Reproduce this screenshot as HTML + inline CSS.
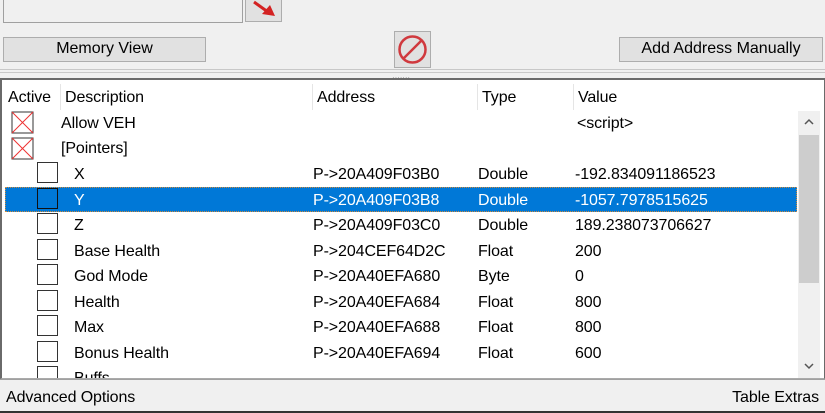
<!DOCTYPE html>
<html><head><style>
*{margin:0;padding:0;box-sizing:border-box}
body{width:825px;height:413px;background:#f0f0f0;font-family:"Liberation Sans",sans-serif;font-size:16px;color:#000;position:relative;overflow:hidden}
.a{position:absolute}
.btn{position:absolute;background:#e1e1e1;border:1px solid #adadad;text-align:center;line-height:22px}
.t{position:absolute;white-space:nowrap;margin-top:1px;letter-spacing:-0.1px}
.cb{position:absolute;width:21px;height:21px;border:1px solid #333;background:#fff}
</style></head><body>
<div class="a" style="left:3px;top:-4px;width:240px;height:27px;border:1px solid #a0a0a0;background:#f0f0f0"></div>
<div class="btn" style="left:245px;top:-2px;width:37px;height:24px"></div>
<svg class="a" style="left:250px;top:0" width="30" height="20"><path d="M4 2 L18 12" stroke="#d32222" stroke-width="3"/><path d="M12 14 L25 16 L20 5 Z" fill="#d32222"/></svg>
<div class="btn" style="left:3px;top:37px;width:203px;height:25px">Memory View</div>
<div class="btn" style="left:394px;top:31px;width:37px;height:37px"></div>
<svg class="a" style="left:397px;top:34px" width="31" height="31"><circle cx="15.5" cy="15.5" r="13" fill="none" stroke="#d0393e" stroke-width="2.5"/><path d="M7 24 L24 7" stroke="#d0393e" stroke-width="2.5"/></svg>
<div class="btn" style="left:619px;top:37px;width:204px;height:25px">Add Address Manually</div>
<div class="a" style="left:0;top:69px;width:825px;height:1px;background:#c8c8c8"></div>
<div class="a" style="left:0;top:72px;width:825px;height:1px;background:#c8c8c8"></div>
<div class="t" style="left:392px;top:72px;font-size:8px;color:#999">·······</div>
<div class="a" style="left:0;top:78px;width:825px;height:301px;background:#fff;border-top:2px solid #6a6a6a;border-left:2px solid #6a6a6a;border-right:1px solid #6a6a6a;border-bottom:1px solid #aaa"></div>
<div class="a" style="left:60px;top:84px;width:1px;height:26px;background:#e5e5e5"></div>
<div class="a" style="left:312px;top:84px;width:1px;height:26px;background:#e5e5e5"></div>
<div class="a" style="left:477px;top:84px;width:1px;height:26px;background:#e5e5e5"></div>
<div class="a" style="left:573px;top:84px;width:1px;height:26px;background:#e5e5e5"></div>
<div class="t" style="left:8px;top:88px">Active</div>
<div class="t" style="left:65px;top:88px">Description</div>
<div class="t" style="left:317px;top:88px">Address</div>
<div class="t" style="left:482px;top:88px">Type</div>
<div class="t" style="left:578px;top:88px">Value</div>
<div class="a" style="left:798px;top:111px;width:22px;height:267px;background:#f0f0f0"></div>
<div class="a" style="left:799px;top:135px;width:20px;height:148px;background:#cdcdcd"></div>
<svg class="a" style="left:803px;top:117px" width="12" height="10"><path d="M2 7 L6 3 L10 7" fill="none" stroke="#555" stroke-width="1.5"/></svg>
<svg class="a" style="left:803px;top:361px" width="12" height="10"><path d="M2 3 L6 7 L10 3" fill="none" stroke="#555" stroke-width="1.5"/></svg>
<div class="a" style="left:5px;top:187px;width:792px;height:25px;background:#0078d7;border:1px dotted #d08a3a"></div>
<svg class="a" style="left:11px;top:111px" width="24" height="50"><rect x="1" y="1" width="21" height="21" fill="#fff" stroke="#333"/><path d="M1 1 L22 22 M22 1 L1 22" stroke="#e33" stroke-width="1"/><rect x="1" y="27" width="21" height="21" fill="#fff" stroke="#333"/><path d="M1 27 L22 48 M22 27 L1 48" stroke="#e33" stroke-width="1"/></svg>
<div class="t" style="left:61px;top:114px">Allow VEH</div><div class="t" style="left:577px;top:114px">&lt;script&gt;</div>
<div class="t" style="left:61px;top:139px">[Pointers]</div>
<div class="cb" style="left:37px;top:162px"></div>
<div class="t" style="left:74px;top:165px">X</div><div class="t" style="left:313px;top:165px">P-&gt;20A409F03B0</div><div class="t" style="left:478px;top:165px">Double</div><div class="t" style="left:575px;top:165px">-192.834091186523</div>
<div class="cb" style="left:37px;top:188px;background:#0078d7;border-color:#111"></div>
<div class="t" style="left:74px;top:191px;color:#fff">Y</div><div class="t" style="left:313px;top:191px;color:#fff">P-&gt;20A409F03B8</div><div class="t" style="left:478px;top:191px;color:#fff">Double</div><div class="t" style="left:575px;top:191px;color:#fff">-1057.7978515625</div>
<div class="cb" style="left:37px;top:213px"></div>
<div class="t" style="left:74px;top:216px">Z</div><div class="t" style="left:313px;top:216px">P-&gt;20A409F03C0</div><div class="t" style="left:478px;top:216px">Double</div><div class="t" style="left:575px;top:216px">189.238073706627</div>
<div class="cb" style="left:37px;top:239px"></div>
<div class="t" style="left:74px;top:242px">Base Health</div><div class="t" style="left:313px;top:242px">P-&gt;204CEF64D2C</div><div class="t" style="left:478px;top:242px">Float</div><div class="t" style="left:575px;top:242px">200</div>
<div class="cb" style="left:37px;top:264px"></div>
<div class="t" style="left:74px;top:267px">God Mode</div><div class="t" style="left:313px;top:267px">P-&gt;20A40EFA680</div><div class="t" style="left:478px;top:267px">Byte</div><div class="t" style="left:575px;top:267px">0</div>
<div class="cb" style="left:37px;top:290px"></div>
<div class="t" style="left:74px;top:293px">Health</div><div class="t" style="left:313px;top:293px">P-&gt;20A40EFA684</div><div class="t" style="left:478px;top:293px">Float</div><div class="t" style="left:575px;top:293px">800</div>
<div class="cb" style="left:37px;top:315px"></div>
<div class="t" style="left:74px;top:318px">Max</div><div class="t" style="left:313px;top:318px">P-&gt;20A40EFA688</div><div class="t" style="left:478px;top:318px">Float</div><div class="t" style="left:575px;top:318px">800</div>
<div class="cb" style="left:37px;top:341px"></div>
<div class="t" style="left:74px;top:344px">Bonus Health</div><div class="t" style="left:313px;top:344px">P-&gt;20A40EFA694</div><div class="t" style="left:478px;top:344px">Float</div><div class="t" style="left:575px;top:344px">600</div>
<div class="a" style="left:2px;top:366px;width:795px;height:12px;overflow:hidden"><div class="cb" style="left:35px;top:0"></div><div class="t" style="left:72px;top:3px">Buffs</div></div>
<div class="a" style="left:0;top:379px;width:825px;height:1px;background:#a0a0a0"></div>
<div class="t" style="left:6px;top:388px">Advanced Options</div>
<div class="t" style="right:6px;top:388px">Table Extras</div>
<div class="a" style="left:0;top:411px;width:825px;height:2px;background:#333"></div>
</body></html>
